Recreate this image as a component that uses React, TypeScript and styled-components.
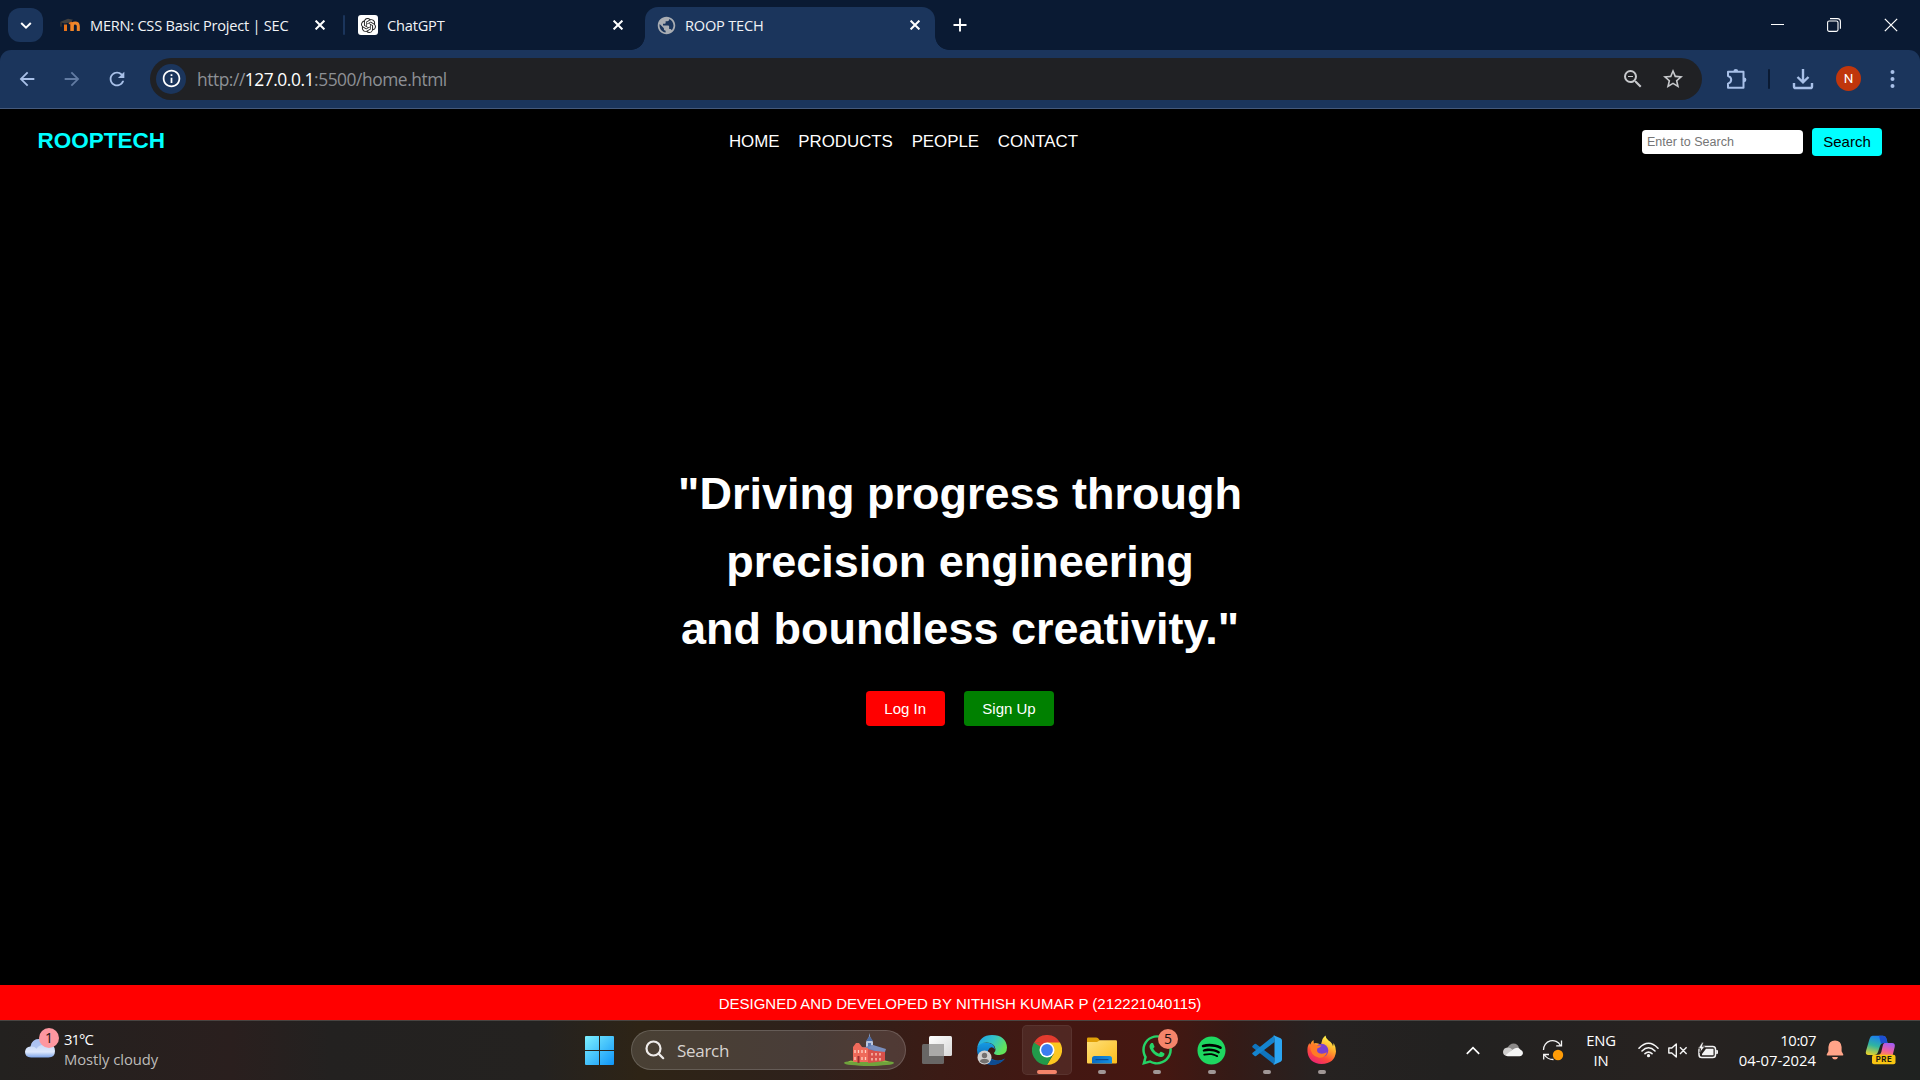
import React from "react";
import styled, { createGlobalStyle } from "styled-components";
import {
  MdArrowBack,
  MdArrowForward,
  MdRefresh,
  MdStarBorder,
  MdPublic,
  MdZoomOut,
  MdInfoOutline,
} from "react-icons/md";
import { FaSpotify, FaWhatsapp } from "react-icons/fa";
import { SiOpenai } from "react-icons/si";

const Global = createGlobalStyle`
  * { box-sizing: border-box; }
  html, body { margin: 0; padding: 0; background: #000; overflow: hidden; }
  svg { display: block; flex: none; }
`;

const uiFont = `"Segoe UI", "Open Sans", "Noto Sans", sans-serif`;

const Screen = styled.div`
  width: 1920px;
  height: 1080px;
  display: flex;
  flex-direction: column;
  overflow: hidden;
  font-family: ${uiFont};
`;

/* ---------- Browser chrome ---------- */

const TabStrip = styled.div`
  height: 50px;
  background: #0a1a33;
  display: flex;
  align-items: center;
  padding-left: 8px;
  flex: none;
`;

const TabSearch = styled.div`
  width: 35px;
  height: 34px;
  border-radius: 12px;
  background: #1b355c;
  display: grid;
  place-items: center;
  margin-right: 17px;
`;

const Tab = styled.div<{ $width: number; $before?: number; $after?: number }>`
  width: ${(p) => p.$width}px;
  height: 50px;
  padding-left: ${(p) => p.$before ?? 0}px;
  padding-right: ${(p) => p.$after ?? 0}px;
  display: flex;
  align-items: center;
`;

const ActiveTab = styled.div`
  width: 290px;
  height: 43px;
  margin-top: 7px;
  padding: 0 15px 7px 11px;
  display: flex;
  align-items: center;
  background: #1b355c;
  border-radius: 13px 13px 0 0;
`;

const Foot = styled.div<{ $side: "left" | "right" }>`
  width: 14px;
  height: 14px;
  align-self: flex-end;
  background: radial-gradient(
    circle at ${(p) => (p.$side === "left" ? "0 0" : "100% 0")},
    transparent 13.5px,
    #1b355c 14.2px
  );
`;

const Favicon = styled.div<{ $tile?: boolean; $gap: number }>`
  width: 20px;
  height: 20px;
  display: grid;
  place-items: center;
  border-radius: 3px;
  margin-right: ${(p) => p.$gap}px;
  color: ${(p) => (p.$tile ? "#222" : "#a9adb3")};
  background: ${(p) => (p.$tile ? "#fff" : "transparent")};
`;

const TabTitle = styled.span<{ $spacing?: number }>`
  flex: 1;
  color: #f1f3f6;
  font-size: 14.6px;
  line-height: 20px;
  white-space: nowrap;
  letter-spacing: ${(p) => p.$spacing ?? -0.2}px;
`;

const Divider = styled.i<{ $height: number; $color: string; $before: number; $after?: number }>`
  width: 2px;
  height: ${(p) => p.$height}px;
  margin: 0 ${(p) => p.$after ?? 0}px 0 ${(p) => p.$before}px;
  border-radius: 1px;
  background: ${(p) => p.$color};
`;

const NewTab = styled.div`
  margin-left: 4px;
`;

const WindowButtons = styled.div`
  margin-left: auto;
  display: flex;
  align-items: center;
  padding-right: 22px;
  gap: 43px;
`;

const ToolbarWrap = styled.div`
  height: 59px;
  flex: none;
  background: #0a1a33;
`;

const Toolbar = styled.div`
  height: 59px;
  background: #1b355c;
  border-radius: 11px 11px 0 0;
  border-bottom: 1px solid #45597b;
  display: flex;
  align-items: center;
  padding: 0 25px 1px 16px;
  color: #a8c0e8;
`;

const NavButtons = styled.div`
  display: flex;
  flex: none;
  width: 134px;
  gap: 23px;
  & > :nth-child(2) { opacity: 0.5; }
`;

const Omnibox = styled.div`
  width: 1552px;
  flex: none;
  height: 42px;
  border-radius: 21px;
  background: #202124;
  display: flex;
  align-items: center;
  padding: 0 17px 0 6px;
  color: #c7c9cc;
`;

const SiteInfo = styled.div`
  width: 30px;
  height: 30px;
  border-radius: 50%;
  background: #1b355c;
  color: #fff;
  display: grid;
  place-items: center;
  margin-right: 11px;
`;

const Url = styled.span`
  flex: 1;
  font-size: 17.4px;
  letter-spacing: -0.46px;
  line-height: 24px;
  padding-top: 1px;
  color: #8d9095;
  b { color: #fff; font-weight: 400; }
`;

const OmniActions = styled.div`
  display: flex;
  align-items: center;
  gap: 16px;
`;

const ToolbarActions = styled.div`
  flex: 1;
  display: flex;
  align-items: center;
  justify-content: flex-end;
`;

const Avatar = styled.div`
  width: 25px;
  height: 25px;
  border-radius: 50%;
  background: #c0360c;
  color: #fff;
  font: 400 13.5px/25px Roboto, sans-serif;
  text-align: center;
  margin: 0 29px 0 22px;
`;

/* ---------- Web page ---------- */

const Page = styled.div`
  height: 911px;
  flex: none;
  display: flex;
  flex-direction: column;
  background: #000;
  color: #fff;
  font-family: Arial, "Liberation Sans", sans-serif;
`;

const SiteHeader = styled.header`
  height: 66px;
  padding: 0 38px 0 37.5px;
  display: flex;
  align-items: center;
  justify-content: space-between;
`;

const Brand = styled.div`
  color: #0ff;
  font-size: 22.5px;
  font-weight: 700;
  line-height: 26px;
  padding-bottom: 3px;
`;

const SiteNav = styled.nav`
  display: flex;
  gap: 18.75px;
  font-size: 16.875px;
  line-height: 20px;
  padding-bottom: 1px;
`;

const SearchForm = styled.div`
  display: flex;
  align-items: center;
  gap: 9px;
`;

const SearchInput = styled.input`
  width: 161px;
  height: 24px;
  border: 0;
  border-radius: 3.75px;
  padding: 0 0 1px 5px;
  font: 12.5px Arial, "Liberation Sans", sans-serif;
  &::placeholder { color: #757575; opacity: 1; }
`;

const SearchButton = styled.button`
  width: 70px;
  height: 28px;
  border: 0;
  padding: 0;
  border-radius: 3.75px;
  background: #0ff;
  color: #000;
  font: 15px/28px Arial, "Liberation Sans", sans-serif;
`;

const Hero = styled.main`
  flex: 1;
  display: flex;
  flex-direction: column;
  align-items: center;
  padding-top: 285px;
`;

const Slogan = styled.h1`
  margin: 0;
  font-size: 45px;
  line-height: 67.5px;
  text-align: center;
`;

const HeroButtons = styled.div`
  display: flex;
  gap: 18.75px;
  margin-top: 28.5px;
`;

const HeroButton = styled.button<{ $color: string }>`
  height: 35px;
  border: 0;
  border-radius: 3.75px;
  padding: 0 18.75px;
  background: ${(p) => p.$color};
  color: #fff;
  font: 15px/35px Arial, "Liberation Sans", sans-serif;
`;

const SiteFooter = styled.footer`
  height: 35px;
  background: #f00;
  text-align: center;
  font-size: 15px;
  line-height: 37px;
`;

/* ---------- Taskbar ---------- */

const Taskbar = styled.div`
  height: 60px;
  flex: none;
  border-top: 1px solid #4a4542;
  background: linear-gradient(
    90deg,
    #23211f 0,
    #2a1f1e 230px,
    #232120 330px,
    #242220 540px,
    #2e2416 640px,
    #2e211b 800px,
    #3b1b15 940px,
    #431712 1060px,
    #451711 1160px,
    #351a16 1230px,
    #262221 1320px,
    #222120 1450px,
    #272220 1680px,
    #1f2220 1920px
  );
  display: flex;
  align-items: center;
  color: #fff;
`;

const Weather = styled.div`
  width: 571px;
  height: 59px;
  display: flex;
  padding: 7px 0 0 25px;
`;

const WeatherIcon = styled.div`
  position: relative;
  width: 39px;
  padding-top: 9px;
`;

const Badge = styled.span<{ $x: number; $y: number; $color: string }>`
  position: absolute;
  left: ${(p) => p.$x}px;
  top: ${(p) => p.$y}px;
  width: 20px;
  height: 20px;
  border-radius: 50%;
  background: ${(p) => p.$color};
  color: #1b1010;
  font-size: 14px;
  line-height: 20px;
  text-align: center;
`;

const WeatherText = styled.div`
  font-size: 14.8px;
  line-height: 20px;
  padding-top: 1px;
  white-space: nowrap;
  span { display: block; }
  span:first-child { letter-spacing: -0.9px; }
  span + span { color: #bdbbb9; letter-spacing: -0.05px; }
`;

const AppCell = styled.div<{ $width?: number }>`
  position: relative;
  width: ${(p) => p.$width ?? 55}px;
  height: 59px;
  padding-bottom: 1px;
  display: grid;
  place-items: center;
`;

const AppTile = styled.div`
  width: 50px;
  height: 50px;
  border-radius: 5px;
  background: rgba(255, 255, 255, 0.07);
  border: 1px solid rgba(255, 255, 255, 0.06);
  display: grid;
  place-items: center;
`;

const Indicator = styled.i<{ $active?: boolean }>`
  position: absolute;
  bottom: 6px;
  left: 50%;
  transform: translateX(-50%);
  width: ${(p) => (p.$active ? 20 : 8)}px;
  height: 4px;
  border-radius: 2px;
  background: ${(p) => (p.$active ? "#f5846a" : "#a09796")};
`;

const TaskSearch = styled.div`
  width: 275px;
  height: 40px;
  margin: 0 3px 1px 4px;
  border-radius: 20px;
  border: 1px solid rgba(255, 255, 255, 0.16);
  background: rgba(255, 255, 255, 0.13);
  display: flex;
  align-items: center;
  padding: 0 11px 0 13px;
  font-size: 17px;
  letter-spacing: -0.3px;
  color: #d8d3d0;
`;

const TaskSearchText = styled.span`
  flex: 1;
  padding-left: 12px;
  line-height: 24px;
  padding-top: 1px;
`;

const Tray = styled.div`
  flex: 1;
  height: 59px;
  display: flex;
  align-items: center;
  justify-content: flex-end;
  padding: 0 24px 1px 0;
`;

const TrayItem = styled.div<{ $width: number; $gap: number }>`
  width: ${(p) => p.$width}px;
  margin-right: ${(p) => p.$gap}px;
  display: grid;
  place-items: center;
`;

const TrayText = styled.div<{ $width: number; $gap: number; $align: "center" | "right"; $spacing: number }>`
  width: ${(p) => p.$width}px;
  margin-right: ${(p) => p.$gap}px;
  text-align: ${(p) => p.$align};
  font-size: 14.8px;
  line-height: 20px;
  letter-spacing: ${(p) => p.$spacing}px;
  white-space: nowrap;
  span { display: block; }
`;

const Time = styled.span`
  letter-spacing: -0.4px;
`;

/* ---------- Icons ---------- */

const Cross = ({ size = 10, stroke = 2 }: { size?: number; stroke?: number }) => (
  <svg width={size} height={size} viewBox="0 0 10 10" stroke="#fff" strokeWidth={stroke} fill="none">
    <path d="M.6.6l8.8 8.8M9.4.6L.6 9.4" />
  </svg>
);

const Plus = () => (
  <svg width="14" height="14" viewBox="0 0 14 14" stroke="#fff" strokeWidth="1.9">
    <path d="M7 .5v13M.5 7h13" />
  </svg>
);

const Minimise = () => (
  <svg width="13" height="14" viewBox="0 0 13 14" stroke="#fff">
    <path d="M0 6.5h13" />
  </svg>
);

const Moodle = () => (
  <svg width="20" height="14" viewBox="0 0 20 14" fill="none">
    <path d="M5.5 13V6.5M11.8 13V6.8q0-2.4-3-2.4" stroke="#e8731a" strokeWidth="3" />
    <path d="M12.3 13V8q0-2.9 2.9-2.9T18.3 8v5" stroke="#f0862a" strokeWidth="3" />
    <path d="M0 4L8 .8l5 1-3 2.6-5.5 1z" fill="#43413f" />
    <path d="M1 4.2v4.5" stroke="#55402c" />
  </svg>
);

const Puzzle = () => (
  <svg width="22" height="22" viewBox="0 0 22 22" fill="none" stroke="currentColor" strokeWidth="2" strokeLinejoin="round">
    <path d="M2 3.8h15.5v16H2v-4.200q3.2-1 3.200-3.800T2 8z" />
    <path d="M7.400 3.400a2.400 2.400 0 0 1 4.800 0zM18 9.400a2.400 2.400 0 0 1 0 4.800z" fill="currentColor" stroke="none" />
  </svg>
);

const Download = () => (
  <svg width="22" height="22" viewBox="0 0 22 22" fill="none" stroke="currentColor" strokeWidth="2.4">
    <path d="M11 1v13M5.500 9l5.500 5.300L16.500 9M2 15v3.400q0 1.600 1.600 1.600h14.800q1.600 0 1.600-1.600V15" />
  </svg>
);

const Kebab = () => (
  <svg width="5" height="20" viewBox="0 0 5 20" fill="currentColor">
    <circle cx="2.500" cy="3" r="2" />
    <circle cx="2.500" cy="10" r="2" />
    <circle cx="2.500" cy="17" r="2" />
  </svg>
);

const Restore = () => (
  <svg width="14" height="14" viewBox="0 0 14 14" fill="none" stroke="#fff" strokeWidth="1.1">
    <rect x=".6" y="3" width="10.4" height="10.4" rx="1.6" />
    <path d="M3 .6h7.400q3 0 3 3v7.200" />
  </svg>
);

const CloudIcon = () => (
  <svg width="31" height="22" viewBox="0 0 31 22">
    <defs>
      <linearGradient id="cl" x1="0" y1="0" x2="0" y2="1">
        <stop offset="0" stopColor="#b8cdf5" />
        <stop offset=".7" stopColor="#dde8fd" />
        <stop offset="1" stopColor="#7da4e8" />
      </linearGradient>
    </defs>
    <circle cx="21" cy="6" r="7.500" fill="#f07a10" />
    <path d="M6 20.500q-6 0-6-5.700Q.4 10 5.500 9.500 7 2 14 2q6.500 0 8.500 5.300Q30 7 30 14q0 6.500-6.500 6.500z" fill="url(#cl)" />
    <path d="M5.500 9.500q4-.6 6 2.300 3-5.300 11-4.500Q20 2 14 2 7 2 5.500 9.500" fill="#9fb9ee" opacity=".65" />
  </svg>
);

const WindowsLogo = () => (
  <svg width="29" height="29" viewBox="0 0 29 29" fill="url(#wn)">
    <defs>
      <linearGradient id="wn" x1="0" y1="0" x2="29" y2="29" gradientUnits="userSpaceOnUse">
        <stop stopColor="#7df0ff" />
        <stop offset="1" stopColor="#0f95f8" />
      </linearGradient>
    </defs>
    <path d="M0 1q0-1 1-1h13v14H0zM15 0h13q1 0 1 1v13H15zM0 15h14v14H1q-1 0-1-1zM15 15h14v13q0 1-1 1H15z" />
  </svg>
);

const SearchGlass = () => (
  <svg width="20" height="20" viewBox="0 0 20 20" fill="none" stroke="#efecea" strokeWidth="2.2" strokeLinecap="round">
    <circle cx="8.500" cy="8.500" r="7" />
    <path d="M13.600 13.600l4.600 4.600" />
  </svg>
);

const Hall = () => (
  <svg width="50" height="34" viewBox="0 0 50 34">
    <ellipse cx="25" cy="30" rx="25" ry="3" fill="#6fa33c" />
    <path d="M25.500 0l.7 4h-1.400z" fill="#8aa2c8" />
    <path d="M22 9l3.500-6L29 9v8h-7z" fill="#b9c6df" />
    <path d="M22 8l3.500-5L29 8z" fill="#4d6ca6" />
    <path d="M24 10h3v5h-3z" fill="#5a79b3" />
    <path d="M18 15l10-3 13 5-10 2-5-2z" fill="#6d84b8" />
    <path d="M9 14l3-4h3l3 4 6 1v14H9z" fill="#ef6a5a" />
    <path d="M24 16l7 2 10-2v12l-17 2z" fill="#d9504a" />
    <path d="M24 15l5-3 13 4-1 3-9-1-2-1z" fill="#7a8fbe" />
    <path d="M11 17v3M14.500 17v3M18 17v3M21.500 17v3M11 24v3M18 24v3M21.500 24v3M28 20v2.500M32 20v2.500M36 20v2.500M28 25v2.500M32 25v2.500M36 25v2.500" stroke="#ffd0c0" strokeWidth="1.3" />
    <path d="M14.500 23v7" stroke="#9b2c30" strokeWidth="2" />
    <path d="M4 29q3-3 6 0M38 29q3-3 7 0" fill="#8cbb45" />
  </svg>
);

const TaskView = () => (
  <svg width="30" height="28" viewBox="0 0 30 28">
    <defs>
      <linearGradient id="tv" x1="0" y1="0" x2="1" y2="1">
        <stop stopColor="#fff" />
        <stop offset="1" stopColor="#d8d8d8" />
      </linearGradient>
    </defs>
    <rect x="0" y="8" width="22" height="20" rx="1.5" fill="#686665" />
    <rect x="7" y="0" width="23" height="20" rx="1.5" fill="url(#tv)" />
    <path d="M7 8h15v12H8.500Q7 20 7 18.500z" fill="#aaa9a8" />
  </svg>
);

const EdgeLogo = () => (
  <svg width="30" height="30" viewBox="0 0 30 30">
    <defs>
      <linearGradient id="e1" x1="0" y1="0" x2="1" y2=".45">
        <stop offset=".1" stopColor="#20a6e8" />
        <stop offset=".55" stopColor="#35c4c4" />
        <stop offset="1" stopColor="#62e35a" />
      </linearGradient>
      <linearGradient id="e2" x1="0" y1="0" x2="0" y2="1">
        <stop stopColor="#159be4" />
        <stop offset="1" stopColor="#0b56a8" />
      </linearGradient>
    </defs>
    <path d="M0 15Q1 6 8 7.500q10 0 10 7-4-5-7 1-1 9 10 10 4 0 7-2-5 6.500-13 6.500Q1 29 0 15z" fill="url(#e2)" />
    <path d="M11 18q1 8 10 8 4 0 7-2.500Q23 30 15 30 9 27 11 18z" fill="#0e4b91" />
    <path d="M.3 12.500Q2.500 0 15 0q14 0 15 12.500 0 7-7.500 7.500-5.500 0-5.500-2 1.800-1.300 1.500-4Q17.500 7.500 9.500 7.500 3 7.500.3 12.500z" fill="url(#e1)" />
    <circle cx="7.500" cy="22.500" r="7" fill="#d0cfce" />
    <circle cx="7.500" cy="20.500" r="2.700" fill="#74706f" />
    <path d="M2.800 26.500q.4-2.500 3-2.500h3.400q2.600 0 3 2.500-4.700 4-9.400 0z" fill="#74706f" />
  </svg>
);

const ChromeLogo = () => (
  <svg width="30" height="30" viewBox="0 0 30 30">
    <path d="M15 15L2 7.500A15 15 0 0 1 28 7.500z" fill="#e33b2e" />
    <path d="M15 15L2 7.500A15 15 0 0 0 15 30z" fill="#229a4a" />
    <path d="M15 7.500h13A15 15 0 0 1 15 30l6.500-11z" fill="#fcc720" />
    <path d="M8.500 18.700L2 7.500h6l2 6zM15 30l6.500-11.300-6 2L12 26z" fill="#229a4a" />
    <path d="M2 7.500h26H15L9 12z" fill="#e33b2e" />
    <circle cx="15" cy="15" r="7.500" fill="#fff" />
    <circle cx="15" cy="15" r="5.900" fill="#3b7df0" />
  </svg>
);

const Folder = () => (
  <svg width="30" height="27" viewBox="0 0 30 27">
    <defs>
      <linearGradient id="fo" x1="0" y1="0" x2="1" y2="1">
        <stop stopColor="#ffe07a" />
        <stop offset="1" stopColor="#fbbd1c" />
      </linearGradient>
      <linearGradient id="fb" x1="0" y1="0" x2="1" y2="0">
        <stop stopColor="#0a6cc4" />
        <stop offset="1" stopColor="#1490e0" />
      </linearGradient>
    </defs>
    <path d="M0 1.500Q0 .4 1.200.4h8q1 0 1.700.7L13 3.500v4H0z" fill="#e0a008" />
    <path d="M0 5h10l3-1.800h15.800q1.200 0 1.200 1.200V25.500q0 1-1 1H1q-1 0-1-1z" fill="url(#fo)" />
    <path d="M5 26.500V21.500q0-2.500 2.500-2.500h15Q25 19 25 21.500v5z" fill="url(#fb)" />
    <path d="M8.500 22.600h13" stroke="#0a4a92" strokeWidth="1.2" />
  </svg>
);

const SpotifyLogo = () => (
  <svg width="29" height="29" viewBox="0 0 29 29">
    <circle cx="14.500" cy="14.500" r="12" fill="#000" />
    <FaSpotify size={29} color="#1ed760" />
  </svg>
);

const CodeLogo = () => (
  <svg width="30" height="30" viewBox="0 0 30 30">
    <path d="M.6 10.800l2-1.700q.8-.5 1.500 0L22.500 23v6.800L.6 12.400q-.8-.8 0-1.600z" fill="#0f74bd" />
    <path d="M.6 19.300l2 1.700q.8.500 1.500 0L22.500 7V.3L.6 17.700q-.8.800 0 1.600z" fill="#1584cf" />
    <path d="M21.500.2L28.600 3.300q1.400.7 1.400 2.200v19q0 1.500-1.400 2.200l-7.100 3.200Q22.500 28 22.500 26V4Q22.500 2 21.500.2z" fill="#2ba5f2" />
  </svg>
);

const FirefoxLogo = () => (
  <svg width="29" height="30" viewBox="0 0 29 30">
    <defs>
      <linearGradient id="ff" x1=".8" y1="0" x2=".25" y2="1">
        <stop offset=".1" stopColor="#fff14a" />
        <stop offset=".4" stopColor="#ffa52a" />
        <stop offset=".7" stopColor="#ff4a3a" />
        <stop offset="1" stopColor="#e8207a" />
      </linearGradient>
    </defs>
    <path d="M14.500 29Q2 28.500.5 17 0 11 2.500 8L3 10Q4.500 6 6.500 5l.3 3.500Q9 7 14 9.500L15.500 4q1-2 3-3.500 0 2.500 3 5 4 2.500 4.500 6l.7-3.500q2.300 4 2.300 8.500Q28 28.500 14.500 29z" fill="url(#ff)" />
    <circle cx="14.500" cy="15.500" r="6.800" fill="#7a3fd0" />
    <path d="M3 10q3-2.500 7 .5h4.500q-1 2-4 2.700-1.500 3.300 1.500 5 4 1.300 8-1-2 6-8 5.500Q3 21 3 10z" fill="#ff7a26" />
  </svg>
);

const Chevron = ({ up = false }: { up?: boolean }) => (
  <svg width="14" height="9" viewBox="0 0 14 9" fill="none" stroke="#fff" strokeWidth={up ? 1.7 : 2}>
    {up ? <path d="M.8 7.800L7 1.600l6.200 6.200" /> : <path d="M2.200 2L7 6.600 11.800 2" />}
  </svg>
);

const OneDrive = () => (
  <svg width="20" height="14" viewBox="0 0 20 14">
    <path d="M4.500 5Q6.500.5 10.500.5 15 .5 16 5l-4 4z" fill="#8c8a89" />
    <path d="M0 9q.3-4.200 4.500-4.500 3 0 5 2.300L4 13Q0 12.500 0 9z" fill="#cfcecd" />
    <path d="M2.500 12.300Q9 7 12 5.300q3.800-1.300 5.300 1.200Q20 7.500 20 10q-.3 3-3.500 3.200H4.500z" fill="#f5f5f5" />
  </svg>
);

const Sync = () => (
  <svg width="22" height="22" viewBox="0 0 22 22" fill="none" stroke="#f4f4f4" strokeWidth="1.3">
    <path d="M1.500 11A9 9 0 0 1 18.500 6.500M19.500 1.500v5.300h-5.300M1.700 20.500v-5h5.300M2.500 16q3 4.600 9 4.500" />
    <circle cx="16" cy="16" r="5.200" fill="#ff9c07" stroke="none" />
  </svg>
);

const Wifi = () => (
  <svg width="21" height="16" viewBox="0 0 21 16" fill="none" stroke="#f4f4f4" strokeWidth="1.6" strokeLinecap="round">
    <path d="M1 6.200q9.500-9.800 19 0M4 9q6.500-6.500 13 0M7 11.700q3.500-3.300 7 0" />
    <circle cx="10.500" cy="13.700" r="1.600" fill="#f4f4f4" stroke="none" />
  </svg>
);

const Muted = () => (
  <svg width="20" height="15" viewBox="0 0 20 15" fill="none" stroke="#f4f4f4" strokeWidth="1.4" strokeLinejoin="round">
    <path d="M.8 5h3L8.300.9v13.200L3.800 10h-3zM12 4.300l6.600 6.600M18.600 4.300L12 10.900" />
  </svg>
);

const Battery = () => (
  <svg width="20" height="17" viewBox="0 0 20 17">
    <rect x="1" y="4.500" width="16.500" height="11" rx="2.800" fill="none" stroke="#f4f4f4" strokeWidth="1.500" />
    <path d="M8 6.700h7.500v6.600H4V12z" fill="#f4f4f4" />
    <path d="M18.200 8h.8q1 0 1 1v2q0 1-1 1h-.8z" fill="#f4f4f4" />
    <path d="M4 .3L.3 6.700h2.400L1.800 11 6.700 4.600H4.300L5.500.3z" fill="#f4f4f4" stroke="#272220" strokeWidth=".7" />
  </svg>
);

const Bell = () => (
  <svg width="18" height="20" viewBox="0 0 18 20" fill="#ffa488">
    <path d="M9 .4q6.300.4 6.600 6.600v4.300l1.700 3.200q.3 1-.7 1H1.400q-1 0-.7-1l1.700-3.200V7Q2.700.8 9 .4zM6 17h6q-.6 2.500-3 2.500T6 17z" />
  </svg>
);

const Copilot = () => (
  <svg width="31" height="30" viewBox="0 0 31 30">
    <defs>
      <linearGradient id="c1" x1=".5" y1="0" x2=".2" y2="1">
        <stop stopColor="#1b7df0" />
        <stop offset=".5" stopColor="#2fb5a0" />
        <stop offset="1" stopColor="#e8d22a" />
      </linearGradient>
      <linearGradient id="c2" x1=".7" y1="0" x2=".3" y2="1">
        <stop stopColor="#a35cf5" />
        <stop offset=".6" stopColor="#ee5fa0" />
        <stop offset="1" stopColor="#ff8a50" />
      </linearGradient>
    </defs>
    <path d="M7.500.8h10q3.200 0 4 3.200L22.500 8h-4q-2.500 0-3.500 3l-2 6q-1 3-4 3H3.500Q0 20 1 16L4.500 4Q5.500.8 7.500.8z" fill="url(#c1)" />
    <path d="M14 .8h3.800q3 0 3.700 3L22.500 8h-4q-1.500 0-2.500 1z" fill="#1d4fd0" />
    <path d="M19.500 8H27q3.500 0 2.700 4l-2 8H12.500q3 0 3.800-3l1.500-6.500q.5-2.500 1.700-2.500z" fill="url(#c2)" />
    <rect x="7" y="19.700" width="23.500" height="9.600" rx="2" fill="#f8c512" />
    <text x="19" y="27.300" textAnchor="middle" fontFamily="Inter, sans-serif" fontWeight="700" fontSize="7.800" letterSpacing=".5" fill="#1d1a10">PRE</text>
  </svg>
);

/* ---------- Sections ---------- */

const BrowserChrome = () => (
  <>
    <TabStrip>
      <TabSearch><Chevron /></TabSearch>
      <Tab $width={285}>
        <Favicon $gap={10}><Moodle /></Favicon>
        <TabTitle $spacing={-0.24}>MERN: CSS Basic Project | SEC</TabTitle>
        <Cross />
        <Divider $height={20} $color="#1b355c" $before={18} />
      </Tab>
      <Tab $width={286} $before={13} $after={8}>
        <Favicon $tile $gap={9}><SiOpenai size={15} /></Favicon>
        <TabTitle>ChatGPT</TabTitle>
        <Cross />
      </Tab>
      <Foot $side="left" />
      <ActiveTab>
        <Favicon $gap={9}><MdPublic size={21} /></Favicon>
        <TabTitle>ROOP TECH</TabTitle>
        <Cross />
      </ActiveTab>
      <Foot $side="right" />
      <NewTab><Plus /></NewTab>
      <WindowButtons>
        <Minimise />
        <Restore />
        <Cross size={14} stroke={0.9} />
      </WindowButtons>
    </TabStrip>
    <ToolbarWrap>
      <Toolbar>
        <NavButtons>
          <MdArrowBack size={22} />
          <MdArrowForward size={22} />
          <MdRefresh size={22} />
        </NavButtons>
        <Omnibox>
          <SiteInfo><MdInfoOutline size={21} /></SiteInfo>
          <Url>http://<b>127.0.0.1</b>:5500/home.html</Url>
          <OmniActions>
            <MdZoomOut size={24} />
            <MdStarBorder size={24} />
          </OmniActions>
        </Omnibox>
        <ToolbarActions>
          <Puzzle />
          <Divider $height={20} $color="#0a1a33" $before={20} $after={22} />
          <Download />
          <Avatar>N</Avatar>
          <Kebab />
        </ToolbarActions>
      </Toolbar>
    </ToolbarWrap>
  </>
);

const WebPage = () => (
  <Page>
    <SiteHeader>
      <Brand>ROOPTECH</Brand>
      <SiteNav>
        {["HOME", "PRODUCTS", "PEOPLE", "CONTACT"].map((t) => (
          <span key={t}>{t}</span>
        ))}
      </SiteNav>
      <SearchForm>
        <SearchInput placeholder="Enter to Search" />
        <SearchButton>Search</SearchButton>
      </SearchForm>
    </SiteHeader>
    <Hero>
      <Slogan>
        "Driving progress through
        <br />
        precision engineering
        <br />
        and boundless creativity."
      </Slogan>
      <HeroButtons>
        <HeroButton $color="#f00">Log In</HeroButton>
        <HeroButton $color="#008000">Sign Up</HeroButton>
      </HeroButtons>
    </Hero>
    <SiteFooter>DESIGNED AND DEVELOPED BY NITHISH KUMAR P (212221040115)</SiteFooter>
  </Page>
);

const SystemBar = () => (
  <Taskbar>
    <Weather>
      <WeatherIcon>
        <CloudIcon />
        <Badge $x={14} $y={0} $color="#fd97a0">1</Badge>
      </WeatherIcon>
      <WeatherText>
        <span>31°C</span>
        <span>Mostly cloudy</span>
      </WeatherText>
    </Weather>
    <AppCell $width={56}><WindowsLogo /></AppCell>
    <TaskSearch>
      <SearchGlass />
      <TaskSearchText>Search</TaskSearchText>
      <Hall />
    </TaskSearch>
    <AppCell><TaskView /></AppCell>
    <AppCell><EdgeLogo /></AppCell>
    <AppCell><AppTile><ChromeLogo /></AppTile><Indicator $active /></AppCell>
    <AppCell><Folder /><Indicator /></AppCell>
    <AppCell>
      <FaWhatsapp size={34} color="#25d366" />
      <Badge $x={29} $y={8} $color="#f5846a">5</Badge>
      <Indicator />
    </AppCell>
    <AppCell><SpotifyLogo /><Indicator /></AppCell>
    <AppCell><CodeLogo /><Indicator /></AppCell>
    <AppCell><FirefoxLogo /><Indicator /></AppCell>
    <Tray>
      <TrayItem $width={14} $gap={23}><Chevron up /></TrayItem>
      <TrayItem $width={20} $gap={19}><OneDrive /></TrayItem>
      <TrayItem $width={22} $gap={18}><Sync /></TrayItem>
      <TrayText $width={38} $gap={18} $align="center" $spacing={-0.2}>
        <span>ENG</span>
        <span>IN</span>
      </TrayText>
      <TrayItem $width={21} $gap={9}><Wifi /></TrayItem>
      <TrayItem $width={20} $gap={10}><Muted /></TrayItem>
      <TrayItem $width={20} $gap={12}><Battery /></TrayItem>
      <TrayText $width={86} $gap={10} $align="right" $spacing={0}>
        <Time>10:07</Time>
        <span>04-07-2024</span>
      </TrayText>
      <TrayItem $width={18} $gap={21}><Bell /></TrayItem>
      <TrayItem $width={31} $gap={0}><Copilot /></TrayItem>
    </Tray>
  </Taskbar>
);

export default function App() {
  return (
    <Screen>
      <Global />
      <BrowserChrome />
      <WebPage />
      <SystemBar />
    </Screen>
  );
}
